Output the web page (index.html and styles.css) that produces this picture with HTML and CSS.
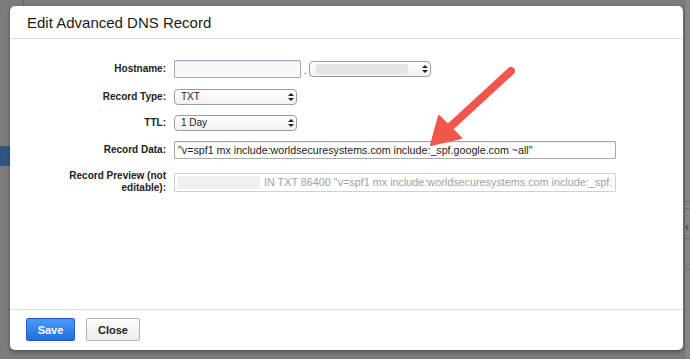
FILE: index.html
```html
<!DOCTYPE html>
<html lang="en">
<head>
  <meta charset="UTF-8">
  <title>Edit Advanced DNS Record</title>
  <link rel="stylesheet" href="styles.css">
</head>
<body>

  <!-- page behind the overlay -->
  <div class="fondo-linea-top"></div>
  <div class="fondo-azul"></div>
  <div class="fondo-derecha">
    <span class="raya r1"></span>
    <span class="raya r2"></span>
    <span class="flecha-lado">&lsaquo;</span>
    <span class="raya r3"></span>
    <span class="raya r4"></span>
  </div>

  <div class="modal">
    <div class="modal-header">
      <h2>Edit Advanced DNS Record</h2>
    </div>

    <div class="modal-body">
      <form class="campos">
        <label class="etiqueta">Hostname:</label>
        <div class="control fila-host">
          <div class="caja caja-host"></div>
          <span class="punto">.</span>
          <div class="selector selector-dominio">
            <span class="borroso"></span>
            <span class="flechas"></span>
          </div>
        </div>

        <label class="etiqueta extra">Record Type:</label>
        <div class="control extra">
          <div class="selector">TXT<span class="flechas"></span></div>
        </div>

        <label class="etiqueta">TTL:</label>
        <div class="control">
          <div class="selector">1 Day<span class="flechas"></span></div>
        </div>

        <label class="etiqueta">Record Data:</label>
        <div class="control">
          <div class="caja caja-ancha">"v=spf1 mx include:worldsecuresystems.com include:_spf.google.com ~all"</div>
        </div>

        <label class="etiqueta extra">Record Preview (not<br>editable):</label>
        <div class="control extra">
          <div class="caja caja-ancha caja-gris"><span class="borroso-largo"></span>IN TXT 86400 "v=spf1 mx include:worldsecuresystems.com include:_spf.</div>
        </div>
      </form>

      <!-- annotation arrow -->
      <svg class="anotacion" width="120" height="110" viewBox="400 50 120 110">
        <line x1="511" y1="71" x2="449" y2="128" stroke="#f0564b" stroke-width="8" stroke-linecap="round"/>
        <polygon points="431,145 439,116 461,138" fill="#f0564b" stroke="#f0564b" stroke-width="2" stroke-linejoin="round"/>
      </svg>
    </div>

    <div class="modal-footer">
      <button type="button" class="btn btn-guardar">Save</button>
      <button type="button" class="btn btn-cerrar">Close</button>
    </div>
  </div>

</body>
</html>
```

FILE: styles.css
```css
body {
  margin: 0;
  padding: 6px 0 0 10px;
  width: 690px;
  height: 359px;
  box-sizing: border-box;
  overflow: hidden;
  background-color: #7c7c7c;
  font-family: "Liberation Sans", Arial, sans-serif;
  position: relative;
}

/* page behind */
.fondo-linea-top {
  position: absolute;
  left: 23px;
  top: 0;
  width: 1px;
  height: 6px;
  background: #6a6a6a;
}
.fondo-azul {
  position: absolute;
  left: 0;
  top: 146px;
  width: 10px;
  height: 20px;
  background: #2f5680;
}
.fondo-derecha {
  position: absolute;
  left: 684px;
  top: 0;
  width: 6px;
  height: 359px;
  background: #868686;
  border-left: 1px solid #707070;
}
.raya {
  position: absolute;
  left: 0;
  width: 6px;
  height: 1px;
  background: #6e6e6e;
}
.r1 { top: 201px; }
.r2 { top: 208px; }
.r3 { top: 238px; }
.r4 { top: 269px; }
.flecha-lado {
  position: absolute;
  left: 0;
  top: 220px;
  font-size: 12px;
  color: #333;
}

/* modal */
.modal {
  width: 673px;
  height: 344px;
  background: white;
  border-radius: 5px;
  box-shadow: 0 2px 4px rgba(0,0,0,0.35);
  display: flex;
  flex-direction: column;
  position: relative;
}
.modal-header {
  height: 32px;
  border-bottom: 1px solid #dcdcdc;
  display: flex;
  align-items: center;
  padding-left: 17px;
}
h2 {
  margin: 0;
  font-size: 15px;
  font-weight: normal;
  color: #1a1a1a;
}
.modal-body {
  height: 270px;
  box-sizing: border-box;
  padding-top: 21px;
}
.campos {
  display: grid;
  grid-template-columns: 156px 1fr;
  column-gap: 8px;
  row-gap: 10px;
  align-items: center;
}
.extra {
  margin-top: 1px;
}
.etiqueta {
  text-align: right;
  font-size: 10px;
  font-weight: bold;
  line-height: 12px;
  color: #222;
}
.control {
  display: flex;
  align-items: center;
}
.caja {
  height: 18px;
  box-sizing: border-box;
  border: 1px solid #a9a9a9;
  border-radius: 1px;
  font-size: 10.7px;
  line-height: 16px;
  padding: 0 3px;
  color: #1c1c1c;
  white-space: nowrap;
  overflow: hidden;
  box-shadow: inset 0 1px 1px rgba(0,0,0,0.08);
}
.caja-host {
  width: 127px;
  background: #f6f9fc;
}
.punto {
  font-size: 11px;
  width: 8px;
  text-align: center;
  color: #555;
  margin-top: 2px;
}
.caja-ancha {
  width: 442px;
}
.caja-gris {
  height: 19px;
  line-height: 17px;
  border-color: #d0d0d0;
  color: #a0a0a0;
  box-shadow: none;
  padding-left: 2px;
  font-size: 10.8px;
}
.borroso-largo {
  display: inline-block;
  width: 83px;
  height: 13px;
  margin-right: 4px;
  vertical-align: -3px;
  background: #f0f0f0;
}
.selector {
  position: relative;
  width: 123px;
  height: 16px;
  box-sizing: border-box;
  border: 1px solid #9c9c9c;
  border-radius: 4px;
  background: linear-gradient(#ffffff, #f1f1f1);
  font-size: 10px;
  line-height: 14px;
  padding-left: 6px;
  color: #1c1c1c;
}
.selector-dominio {
  width: 122px;
}
.borroso {
  position: absolute;
  left: 6px;
  top: 2px;
  width: 92px;
  height: 10px;
  background: #e4e4e4;
  border-radius: 2px;
}
.flechas {
  position: absolute;
  right: 5px;
  top: 3px;
  width: 0;
  height: 8px;
}
.flechas::before,
.flechas::after {
  content: "";
  position: absolute;
  left: -3px;
  border-left: 3px solid transparent;
  border-right: 3px solid transparent;
}
.flechas::before {
  top: 0;
  border-bottom: 3px solid #222;
}
.flechas::after {
  top: 5px;
  border-top: 3px solid #222;
}

/* annotation */
.anotacion {
  position: absolute;
  left: 390px;
  top: 44px;
}

/* footer */
.modal-footer {
  flex: 1;
  border-top: 1px solid #dcdcdc;
  display: flex;
  align-items: flex-start;
  gap: 11px;
  padding: 8px 0 0 16px;
}
.btn {
  height: 23px;
  border-radius: 2px;
  font-family: "Liberation Sans", Arial, sans-serif;
  font-size: 11px;
  font-weight: bold;
  cursor: pointer;
  padding: 0;
}
.btn-guardar {
  width: 49px;
  color: white;
  border: 1px solid #1b5fc4;
  background: linear-gradient(#4a9cf6, #1f6ede);
}
.btn-cerrar {
  width: 54px;
  color: #222;
  border: 1px solid #b3b3b3;
  background: linear-gradient(#fdfdfd, #ececec);
}
```
